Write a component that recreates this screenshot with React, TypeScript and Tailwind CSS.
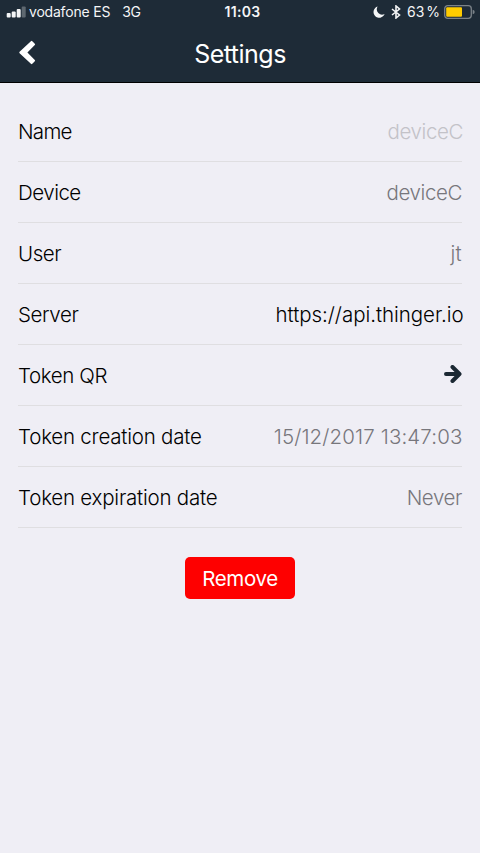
import React from "react";

type Row = { label: string; value?: string; color?: string; labelTracking: string; valueTracking?: string };

const rows: Row[] = [
  { label: "Name", value: "deviceC", color: "text-[#c3c2c8] -mr-px", labelTracking: "tracking-[-0.7px]", valueTracking: "tracking-[-0.4px]" },
  { label: "Device", value: "deviceC", color: "text-[#77767c]", labelTracking: "tracking-[-0.5px]", valueTracking: "tracking-[-0.4px]" },
  { label: "User", value: "jt", color: "text-[#77767c]", labelTracking: "tracking-[-0.4px]", valueTracking: "tracking-[0.3px]" },
  { label: "Server", value: "https://api.thinger.io", color: "text-black -mr-[1.5px]", labelTracking: "tracking-[-0.4px]", valueTracking: "tracking-[-0.05px]" },
  { label: "Token QR", labelTracking: "tracking-[-0.4px]" },
  { label: "Token creation date", value: "15/12/2017 13:47:03", color: "text-[#77767c] -mr-[0.5px]", labelTracking: "tracking-[-0.22px]", valueTracking: "tracking-[0.12px]" },
  { label: "Token expiration date", value: "Never", color: "text-[#77767c]", labelTracking: "tracking-[-0.22px]", valueTracking: "tracking-[-0.4px]" },
];

function StatusBar() {
  return (
    <div className="grid h-6 grid-cols-[1fr_auto_1fr] items-center pl-[6px] pr-[5px] text-[14px] leading-6 text-[#f4f5f6]">
      <div className="flex items-center whitespace-nowrap">
        <svg width="20" height="12" viewBox="0 0 20 12" fill="currentColor">
          <rect x="0.7" y="7" width="4" height="4.6" rx="1" />
          <rect x="5.7" y="5.6" width="4" height="6" rx="1" />
          <rect x="10.7" y="3" width="4" height="8.6" rx="1" />
          <rect x="15.7" y="0.6" width="4" height="11" rx="1" opacity="0.3" />
        </svg>
        <span className="ml-[3px] tracking-[-0.2px]">vodafone ES</span>
        <span className="ml-[12px] tracking-[-0.2px]">3G</span>
      </div>
      <span className="-mr-[3px] ml-px font-semibold tracking-[0.3px]">11:03</span>
      <div className="flex items-center justify-end whitespace-nowrap">
        <svg width="12" height="12" viewBox="0 0 12 12" fill="currentColor">
          <path d="M4.6.6A5.7 5.7 0 1 0 11.6 8 5.3 5.3 0 0 1 4.6.6Z" />
        </svg>
        <svg className="ml-[6px]" width="10" height="14" viewBox="0 0 10 14" fill="none" stroke="currentColor" strokeWidth="1.6">
          <path d="M1 4l7.5 6L5 13V1l3.5 3L1 10" />
        </svg>
        <span className="ml-[6px] [word-spacing:-2px]">63 %</span>
        <svg className="ml-[4px]" width="31" height="14" viewBox="0 0 31 14">
          <rect x="0.7" y="0.7" width="26.6" height="12.6" rx="3" fill="none" stroke="#7b8288" strokeWidth="1.3" />
          <rect x="2.2" y="2.2" width="15.8" height="9.6" rx="1" fill="#ffcc00" />
          <path d="M28.7 4.7q2 .6 2 2.300t-2 2.300z" fill="#7b8288" />
        </svg>
      </div>
    </div>
  );
}

export default function App() {
  return (
    <div className="flex h-[853px] w-[480px] flex-col bg-[#efeef5] font-['Inter',sans-serif]">
      <header className="h-[83px] border-b border-black bg-[#1e2b37] text-white">
        <StatusBar />
        <div className="grid h-[58px] grid-cols-[1fr_auto_1fr] items-center">
          <svg className="ml-[18px]" width="18" height="26" viewBox="0 0 18 26" fill="white">
            <path d="M12.900 1.200q.7-.7 1.400 0l2.500 2.500q.7.7 0 1.400L9.400 12.500l7.400 7.400q.7.7 0 1.400L14.300 23.800q-.7.7-1.400 0L1.600 13.200q-.7-.7 0-1.400Z" />
          </svg>
          <h1 className="pt-[2px] text-[25px] leading-[56px] tracking-[-0.5px]">Settings</h1>
        </div>
      </header>
      <main className="flex flex-col px-[18px] pt-[18px]">
        {rows.map((r) => (
          <div key={r.label} className="flex h-[61px] items-center justify-between border-b border-[#dfdee1] text-[20.5px] leading-[59px] font-[350] whitespace-nowrap">
            <span className={`pt-px text-black ${r.labelTracking}`}>{r.label}</span>
            {r.value ? (
              <span className={`pt-px ${r.color} ${r.valueTracking}`}>{r.value}</span>
            ) : (
              <svg className="mb-[2px]" width="18" height="18" viewBox="0 0 18 18" fill="none" stroke="#1b2833" strokeWidth="4" strokeLinecap="round" strokeLinejoin="round">
                <path d="M2 9H14M8.500 2L15.500 9L8.500 16" />
              </svg>
            )}
          </div>
        ))}
        <button className="mt-[29px] h-[42px] w-[110px] self-center rounded-[5px] bg-[#fe0000] pt-[2px] text-[20.5px] tracking-[-0.4px] text-white">Remove</button>
      </main>
    </div>
  );
}
